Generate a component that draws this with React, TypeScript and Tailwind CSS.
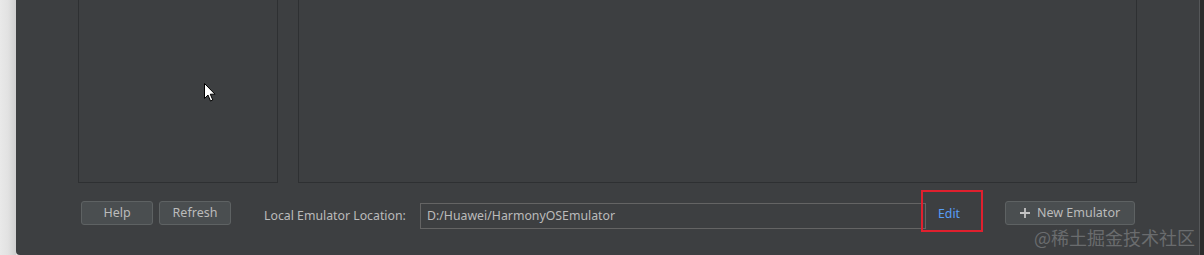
import React from "react";

function Cursor() {
  return (
    <svg width="13" height="20" viewBox="0 0 13 20" className="absolute left-[204px] top-[83px]">
      <path d="M0.5 0.5 L0.5 15.5 L4 12 L6.5 18 L8.8 17 L6.3 11.2 L11 11.2 Z" fill="#ffffff" stroke="#000000" strokeWidth="1" />
    </svg>
  );
}

export default function App() {
  const font = { fontFamily: '"Noto Sans", "Open Sans", "Liberation Sans", sans-serif' };
  return (
    <div className="relative flex h-[255px] w-[1204px] overflow-hidden bg-[#e6e6e6]" style={font}>
      <div className="w-[16px] shrink-0 bg-gradient-to-r from-[#e9e9e9] via-[#e2e2e2] to-[#cfcfcf]" />
      <div className="flex w-[1184px] shrink-0 flex-col rounded-bl-[4px] border-r border-[#555759] bg-[#3d3f41]">
        <div className="flex h-[183px] shrink-0">
          <div className="ml-[62px] h-[183px] w-[200px] border-x border-b border-[#2e3032]" />
          <div className="ml-[20px] h-[183px] w-[839px] border-x border-b border-[#2e3032]" />
        </div>
        <div className="flex items-start text-[12.3px] text-[#bbbbbb]">
          <button className="ml-[65px] mt-[18px] flex h-[24px] w-[72px] items-center justify-center rounded-[3px] border border-[#5e6263] bg-[#4a4e50] text-[12.5px] text-[#bbbbbb]">
            Help
          </button>
          <button className="ml-[6px] mt-[18px] flex h-[24px] w-[72px] items-center justify-center rounded-[3px] border border-[#5e6263] bg-[#4a4e50] text-[12.5px] text-[#bbbbbb]">
            Refresh
          </button>
          <div className="ml-[33px] mt-[24px] w-[156px] shrink-0 whitespace-nowrap leading-[18px]">Local Emulator Location:</div>
          <div className="mt-[20px] flex h-[26px] w-[506px] shrink-0 items-center whitespace-nowrap border border-[#646464] pl-[6px] leading-[18px]">
            D:/Huawei/HarmonyOSEmulator
          </div>
          <div className="ml-[-5px] mt-[7px] flex h-[42px] w-[62px] shrink-0 items-center border-2 border-[#e0202e] pl-[15px] pt-[6px] text-[#589df6]">
            Edit
          </div>
          <button className="ml-[22px] mt-[18px] flex h-[24px] w-[130px] shrink-0 items-center justify-center gap-[7px] rounded-[3px] border border-[#5e6263] bg-[#4a4e50] text-[12.5px] text-[#bbbbbb]">
            <svg width="10" height="10" viewBox="0 0 10 10">
              <path d="M5 0 V10 M0 5 H10" stroke="#c4c4c4" strokeWidth="1.8" />
            </svg>
            <span>New Emulator</span>
          </button>
        </div>
      </div>
      <div className="w-[4px] shrink-0 bg-[#2b2b2b]" />
      <Cursor />
      <div
        className="absolute left-[1034px] top-[226px] text-[18px] leading-[22px] text-[#6a6c6e]"
        style={{ fontFamily: '"Noto Sans CJK SC", "Noto Sans", sans-serif' }}
      >
        @稀土掘金技术社区
      </div>
    </div>
  );
}
